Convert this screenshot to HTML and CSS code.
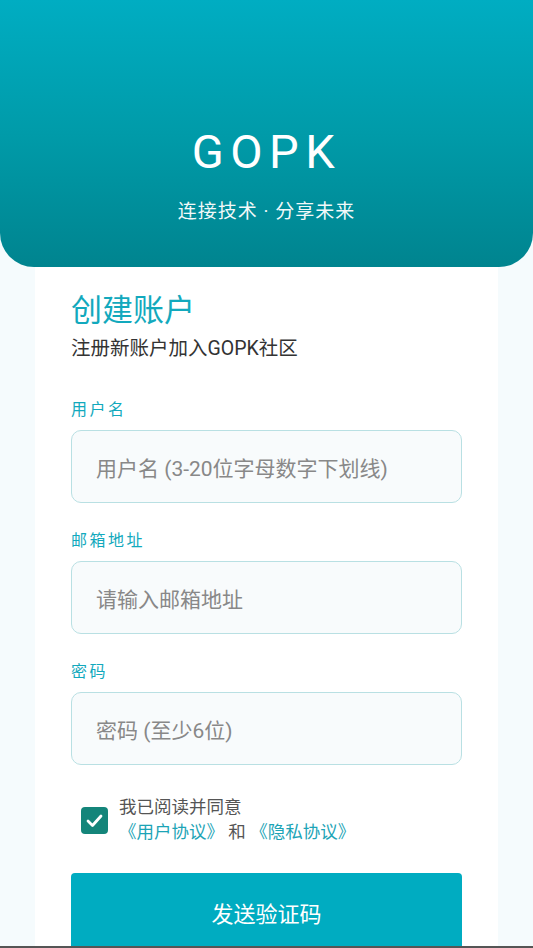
FILE: index.html
```html
<!DOCTYPE html>
<html lang="zh-CN">
<head>
<meta charset="utf-8">
<title>GOPK 注册</title>
<link rel="stylesheet" href="styles.css">
</head>
<body>
<div class="screen">
  <header class="header">
    <h1 class="brand">GOPK</h1>
    <p class="slogan">连接技术 · 分享未来</p>
  </header>
  <main class="card">
    <h2 class="title">创建账户</h2>
    <p class="subtitle">注册新账户加入GOPK社区</p>
    <div class="field">
      <label class="label">用户名</label>
      <div class="input"><span class="placeholder">用户名 (3-20位字母数字下划线)</span></div>
    </div>
    <div class="field">
      <label class="label">邮箱地址</label>
      <div class="input"><span class="placeholder">请输入邮箱地址</span></div>
    </div>
    <div class="field">
      <label class="label">密码</label>
      <div class="input"><span class="placeholder">密码 (至少6位)</span></div>
    </div>
    <div class="agree">
      <span class="checkbox">
        <svg width="27" height="27" viewBox="0 0 27 27"><path d="M7 14 L11.5 18.5 L20 9" fill="none" stroke="#fff" stroke-width="2.8" stroke-linecap="round" stroke-linejoin="round"/></svg>
      </span>
      <div class="agree-text">
        <div class="agree-line">我已阅读并同意</div>
        <div class="agree-line"><span class="link">《用户协议》</span> 和 <span class="link">《隐私协议》</span></div>
      </div>
    </div>
    <button class="btn">发送验证码</button>
  </main>
</div>
<div class="bottom-line"></div>
</body>
</html>
```
FILE: styles.css
```css
* { box-sizing: border-box; }
html, body { margin: 0; padding: 0; }
body {
  background: #f5fbfd;
  font-family: Roboto, "Noto Sans CJK SC", sans-serif;
  width: 533px;
}
.screen {
  height: 946px;
  overflow: hidden;
  display: flex;
  flex-direction: column;
}
.header {
  flex: 0 0 267px;
  background: linear-gradient(180deg, #00adc2 0%, #009ba9 50%, #00848f 100%);
  border-radius: 0 0 34px 34px;
  display: flex;
  flex-direction: column;
  align-items: center;
  padding-top: 121px;
  color: #fff;
}
.brand {
  margin: 0;
  font-weight: 400;
  font-size: 47px;
  line-height: 62px;
  letter-spacing: 6.5px;
}
.slogan {
  margin: 16px 0 0;
  font-size: 19px;
  line-height: 26px;
  letter-spacing: 1px;
  opacity: 0.95;
}
.card {
  flex: 1;
  margin: 0 35px;
  background: #fff;
  padding: 24px 36px 0;
  display: flex;
  flex-direction: column;
}
.title {
  margin: 0;
  font-size: 31px;
  line-height: 40px;
  font-weight: 400;
  color: #12a9bd;
}
.subtitle {
  margin: 5px 0 0;
  font-size: 19.5px;
  line-height: 26px;
  color: #333;
}
.field {
  display: flex;
  flex-direction: column;
}
.field + .field { margin-top: 26px; }
.subtitle + .field { margin-top: 36px; }
.label {
  font-size: 16px;
  line-height: 24px;
  color: #12a9bd;
  letter-spacing: 2.5px;
  margin-bottom: 8px;
}
.input {
  height: 73px;
  border: 1px solid #b9e0e3;
  border-radius: 10px;
  background: #f8fbfc;
  display: flex;
  align-items: center;
  padding-left: 24px;
}
.placeholder {
  font-size: 21px;
  color: #888;
}
.agree {
  margin-top: 30px;
  display: flex;
  align-items: center;
  padding-left: 10px;
  gap: 11px;
}
.checkbox {
  width: 27px;
  height: 27px;
  border-radius: 4px;
  background: #14857a;
  display: flex;
}
.agree-text {
  font-size: 17.5px;
  line-height: 25px;
  color: #555;
}
.link { color: #1ca4b6; }
.btn {
  margin-top: 28px;
  height: 90px;
  border: none;
  border-radius: 4px 4px 0 0;
  background: #00acc1;
  color: #fff;
  font-family: Roboto, "Noto Sans CJK SC", sans-serif;
  font-size: 22px;
  padding: 0 0 12px;
  flex-shrink: 0;
}
.bottom-line {
  height: 2px;
  background: #555;
}
```
